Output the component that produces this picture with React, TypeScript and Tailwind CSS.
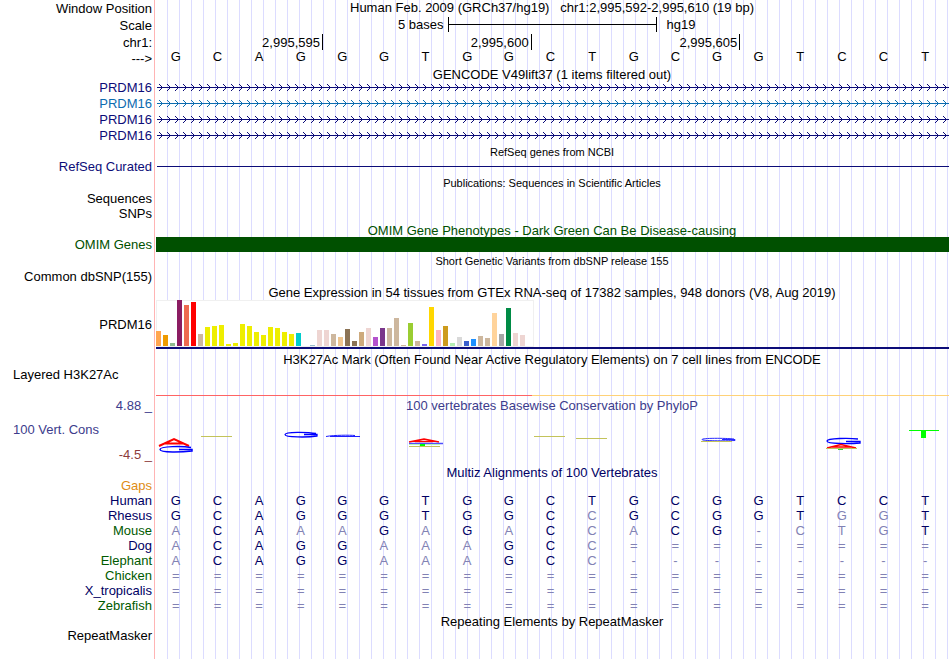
import React from "react";
import clsx from "clsx";

interface RowProps {
  label?: React.ReactNode;
  labelClass?: string;
  className?: string;
  children?: React.ReactNode;
}

const Row: React.FC<RowProps> = ({ label, labelClass, className, children }) => (
  <div className={clsx("flex", className)}>
    <div
      className={clsx(
        "flex w-[155px] flex-none justify-end border-r border-[#ffb4b4] bg-white pr-[2px] shadow-[1px_0_0_#fff]",
        labelClass
      )}
    >
      {label}
    </div>
    <div className="min-w-0 flex-1">{children}</div>
  </div>
);

interface TitleProps {
  children: React.ReactNode;
  small?: boolean;
  low?: boolean;
  label?: React.ReactNode;
  labelClass?: string;
  className?: string;
}

const Title: React.FC<TitleProps> = ({ children, small, low, label, labelClass, className }) => (
  <Row label={label} labelClass={labelClass} className={className ?? "h-[15px]"}>
    <h2
      className={clsx(
        "flex h-full justify-center whitespace-pre pr-px",
        low ? "items-start pt-px" : "items-end",
        small && "text-[11px]"
      )}
    >
      {children}
    </h2>
  </Row>
);

const GeneLine: React.FC<{ id: string; color: string }> = ({ id, color }) => (
  <svg className="block h-4 w-full pl-[2px] pr-px" shapeRendering="crispEdges">
    <defs>
      <pattern id={id} width="8" height="16" patternUnits="userSpaceOnUse">
        <path
          d="M2 4h1v1h-1zM3 5h1v1h-1zM4 6h1v1h-1zM5 7h1v1h-1zM4 8h1v1h-1zM3 9h1v1h-1zM2 10h1v1h-1z"
          fill={color}
        />
      </pattern>
    </defs>
    <rect width="100%" height="16" fill={`url(#${id})`} />
    <rect y="7" width="100%" height="1" fill={color} />
  </svg>
);

const genes = [
  { id: "tx1", color: "#0c0c78" },
  { id: "tx2", color: "#0c6cb0" },
  { id: "tx3", color: "#0c0c78" },
  { id: "tx4", color: "#0c0c78" },
];

// [height, color] per tissue
const tissues: [number, string][] = [
  [15, "#ffa54f"], [11, "#ee9a00"], [3, "#8fbc8f"], [46, "#8b1c62"], [41, "#ee6a50"],
  [44, "#ff0000"], [12, "#cdb79e"], [19, "#eeee00"], [20, "#eeee00"], [21, "#eeee00"],
  [2, "#eeee00"], [3, "#eeee00"], [22, "#eeee00"], [20, "#eeee00"], [14, "#eeee00"],
  [11, "#eeee00"], [19, "#eeee00"], [18, "#eeee00"], [14, "#eeee00"], [12, "#eeee00"],
  [13, "#00cdcd"], [0, "#ee82ee"], [1, "#9ac0cd"], [16, "#eed5d2"], [16, "#eed5d2"],
  [12, "#cdb79e"], [9, "#eec591"], [17, "#8b7355"], [5, "#8b7355"], [14, "#cdaa7d"],
  [18, "#eed5d2"], [9, "#b452cd"], [18, "#7a378b"], [18, "#cdb79e"], [28, "#cdb79e"],
  [1, "#cdb79e"], [23, "#9acd32"], [5, "#cdb79e"], [2, "#7a67ee"], [39, "#ffd700"],
  [16, "#ffb6c1"], [20, "#cd9b1d"], [3, "#b4eeb4"], [9, "#d9d9d9"], [5, "#3a5fcd"],
  [7, "#1e90ff"], [10, "#cdb79e"], [8, "#cdb79e"], [33, "#ffd39b"], [12, "#a6a6a6"],
  [38, "#008b45"], [13, "#eed5d2"], [11, "#eed5d2"], [0, "#ff00ff"],
];

const bases = "GCAGGGTGGCTGCGGTCCT";

// lower case marks a base that differs from human
const species = [
  { name: "Human", color: "text-[#000064]", seq: "GCAGGGTGGCTGCGGTCCT" },
  { name: "Rhesus", color: "text-[#000064]", seq: "GCAGGGTGGCcGCGGTggT" },
  { name: "Mouse", color: "text-[#005a00]", seq: "aCAaaGaGaCcaCG-ctgT" },
  { name: "Dog", color: "text-[#000064]", seq: "aCAGGaaaGCc========" },
  { name: "Elephant", color: "text-[#005a00]", seq: "aCAGGaaaGCc--------" },
  { name: "Chicken", color: "text-[#005a00]", seq: "===================" },
  { name: "X_tropicalis", color: "text-[#000064]", seq: "===================" },
  { name: "Zebrafish", color: "text-[#005a00]", seq: "===================" },
];

const Olive: React.FC<{ y: number }> = ({ y }) => (
  <rect x="4" y={y} width="31" height="1" fill="#c3c35a" />
);

// conservation marks by column, y counted from the top of the track
const marks: Record<number, React.ReactNode> = {
  0: (
    <>
      <path d="M4 33L19 26L34 33M9 30.5H29" fill="none" stroke="#ff0000" strokeWidth="2" />
      <path d="M36 34.5C28 33 5 33 5 36.5S28 39 37 38V36.5H24" fill="none" stroke="#0000ff" strokeWidth="1.5" />
    </>
  ),
  1: <Olive y={23} />,
  3: (
    <path d="M36 20.5C28 19 5 18.5 5 21.5S28 24.5 37 23V21.5H24" fill="none" stroke="#0000ff" strokeWidth="1.3" />
  ),
  4: <path d="M4 23.5C12 22 28 22 33 22.5M8 23.5H38" fill="none" stroke="#1e1eff" />,
  6: (
    <>
      <path d="M4 29L19 26L34 29M10 28.5H28" fill="none" stroke="#ff0000" strokeWidth="1.3" />
      <path d="M4 30.5H38" stroke="#5050ff" strokeWidth="1.3" />
      <rect x="4" y="31" width="31" height="1" fill="#b4f5b4" />
      <rect x="15" y="31" width="5" height="2" fill="#00ff00" />
      <Olive y={33} />
    </>
  ),
  9: <Olive y={23} />,
  10: <Olive y={25} />,
  13: (
    <>
      <path d="M37 26C28 25 5 25 5 26.5S28 28 38 27.5V26.5H25" fill="none" stroke="#2828ff" />
      <Olive y={28} />
    </>
  ),
  16: (
    <>
      <path d="M36 26C28 25 5 25 5 28S28 31 38 30V28.5H24" fill="none" stroke="#0000ff" strokeWidth="1.4" />
      <path d="M5 35L19 31.5L34 35M10 34H28" fill="none" stroke="#ff0000" strokeWidth="1.3" />
      <Olive y={35} />
      <rect x="16" y="36" width="5" height="1" fill="#28dc28" />
    </>
  ),
  18: <path d="M4 17H34V18H21V25H16V18H4Z" fill="#00ff00" />,
};

const baseGrid = "grid grid-cols-[repeat(19,minmax(0,1fr))]";

export default function App() {
  return (
    <main className="flex min-h-screen flex-col bg-[linear-gradient(to_right,#dcdcff_1px,transparent_1px)] bg-[length:12px_100%] bg-[position:11px_0] font-['Liberation_Sans',Arial,sans-serif] text-[13px] leading-[15px] text-black">
      <Title label="Window Position" labelClass="pt-px">
        {"Human Feb. 2009 (GRCh37/hg19)   chr1:2,995,592-2,995,610 (19 bp)"}
      </Title>
      <Row label="Scale" labelClass="pt-[3px]" className="h-[19px]">
        <div className="grid h-[19px] grid-cols-[1fr_209px_1fr] items-center pr-px">
          <span className="pr-1 text-right">5 bases</span>
          <div className="flex h-[15px] items-center border-x border-black">
            <div className="h-px w-full bg-black" />
          </div>
          <span className="pl-[10px]">hg19</span>
        </div>
      </Row>
      <Row label="chr1:" labelClass="pt-px" className="h-[15px]">
        <div className={clsx(baseGrid, "h-[15px] px-px text-right")}>
          <span className="col-span-4 border-r border-black pr-[2px] pt-px">2,995,595</span>
          <span className="col-span-5 border-r border-black pr-[2px] pt-px">2,995,600</span>
          <span className="col-span-5 border-r border-black pr-[2px] pt-px">2,995,605</span>
        </div>
      </Row>
      <Row label="--->" labelClass="pt-[2px]" className="h-[17px]">
        <div className={clsx(baseGrid, "pr-1 text-center")}>
          {bases.split("").map((b, i) => (
            <span key={i}>{b}</span>
          ))}
        </div>
      </Row>

      <Title low className="h-[14px]">GENCODE V49lift37 (1 items filtered out)</Title>
      {genes.map((g, i) => (
        <Row
          key={g.id}
          label="PRDM16"
          labelClass={i === 1 ? "text-[#0c6cb0]" : "text-[#0c0c78]"}
          className="h-4"
        >
          <GeneLine id={g.id} color={g.color} />
        </Row>
      ))}

      <Title small low>RefSeq genes from NCBI</Title>
      <Row label="RefSeq Curated" labelClass="text-[#0c0c78]" className="h-[15px]">
        <div className="flex h-full items-center pl-[2px] pr-px">
          <div className="h-px w-full bg-[#0c0c78]" />
        </div>
      </Row>
      <Title small className="h-[17px]">Publications: Sequences in Scientific Articles</Title>
      <Row label="Sequences" className="h-[15px]" />
      <Row label="SNPs" className="h-4" />

      <Title low>
        <span className="text-[#005000]">OMIM Gene Phenotypes - Dark Green Can Be Disease-causing</span>
      </Title>
      <Row label="OMIM Genes" labelClass="text-[#005000]" className="h-[15px]">
        <div className="h-full px-px">
          <div className="h-full bg-[#005000]" />
        </div>
      </Row>
      <Title small className="h-[17px]">Short Genetic Variants from dbSNP release 155</Title>
      <Row label="Common dbSNP(155)" className="h-4" />

      <Title>
        Gene Expression in 54 tissues from GTEx RNA-seq of 17382 samples, 948 donors (V8, Aug 2019)
      </Title>
      <Row label="PRDM16" labelClass="items-center" className="h-[49px]">
        <div className="px-px">
          <div className="flex h-[47px] w-[378px] items-end gap-[2px] bg-white pb-px shadow-[inset_0_0_0_1px_#f0f0f0]">
            {tissues.map(([height, color], i) => (
              <div key={i} className="w-[5px]" style={{ height, backgroundColor: color }} />
            ))}
          </div>
          <div className="h-[2px] bg-[#0c0c78]" />
        </div>
      </Row>

      <Title className="h-[18px]">
        H3K27Ac Mark (Often Found Near Active Regulatory Elements) on 7 cell lines from ENCODE
      </Title>
      <Row className="h-[29px]" label={<span className="flex-1 pl-[13px]">Layered H3K27Ac</span>}>
        <div className="flex h-full items-end px-px">
          <div className="h-px w-[376px] bg-[#ff6464]" />
          <div className="h-px flex-1 bg-[#ffd278]" />
        </div>
      </Row>

      <Title label="4.88 _" labelClass="pt-[2px] text-[#3c3c8c]" className="h-[17px]">
        <span className="text-[#3c3c8c]">100 vertebrates Basewise Conservation by PhyloP</span>
      </Title>
      <Row
        label={
          <>
            <span className="self-start text-[#3c3c8c]">100 Vert. Cons</span>
            <span className="text-[#8c3c3c]">-4.5 _</span>
          </>
        }
        labelClass="flex-col items-end !justify-start gap-[10px] pl-[13px] pt-[9px]"
        className="h-[51px]"
      >
        <div className={clsx(baseGrid, "pr-[3px]")}>
          {bases.split("").map((_, i) => (
            <svg key={i} className="h-[51px] w-full">
              {marks[i]}
            </svg>
          ))}
        </div>
      </Row>

      <Title low className="h-[14px]">
        <span className="text-[#000064]">Multiz Alignments of 100 Vertebrates</span>
      </Title>
      <Row label="Gaps" labelClass="text-[#e08c14]" className="h-[15px]" />
      <table className="w-full table-fixed border-separate border-spacing-0">
        <tbody>
          {species.map(({ name, color, seq }) => (
            <tr key={name} className="h-[15px]">
              <th
                scope="row"
                className={clsx(
                  "w-[155px] border-r border-[#ffb4b4] bg-white p-0 pr-[2px] text-right font-normal shadow-[1px_0_0_#fff]",
                  color
                )}
              >
                {name}
              </th>
              {seq.split("").map((b, i) => (
                <td
                  key={i}
                  className={clsx(
                    "p-0 text-center",
                    /[A-Z]/.test(b) ? "text-[#000064]" : "text-[#8282b4]"
                  )}
                >
                  {b.toUpperCase()}
                </td>
              ))}
              <td className="w-1 p-0" />
            </tr>
          ))}
        </tbody>
      </table>

      <Title low>Repeating Elements by RepeatMasker</Title>
      <Row label="RepeatMasker" className="h-[15px]" />
      <Row className="flex-1" />
    </main>
  );
}
